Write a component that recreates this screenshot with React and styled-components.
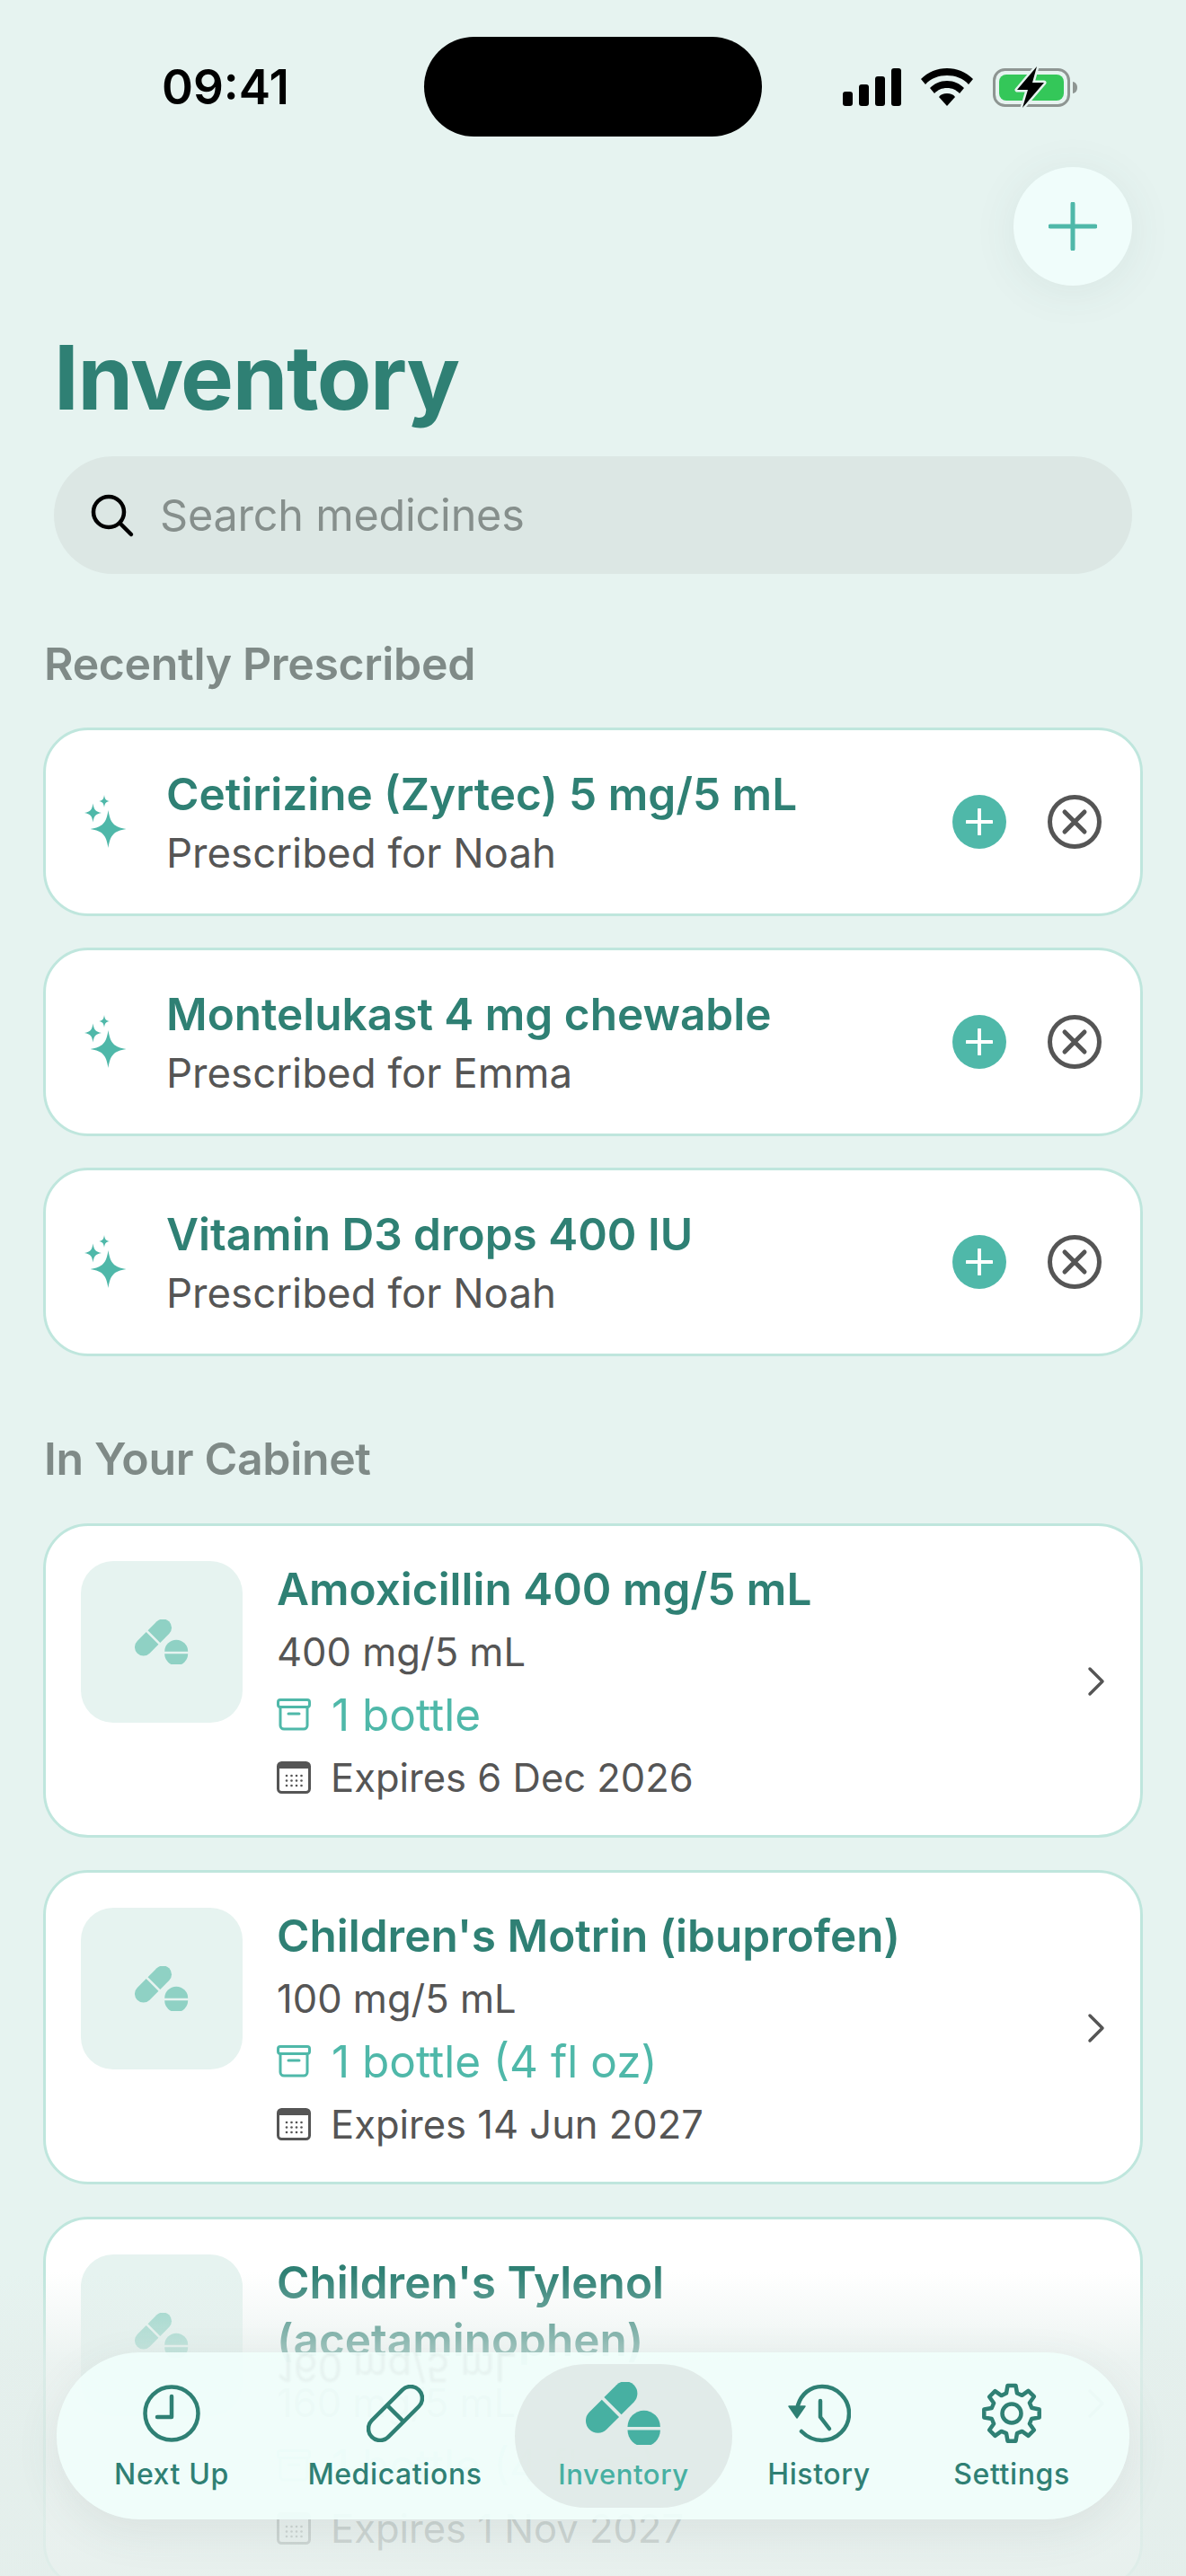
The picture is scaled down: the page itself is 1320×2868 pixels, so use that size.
import React from 'react';
import styled, { createGlobalStyle } from 'styled-components';

const Global = createGlobalStyle`
  html, body { margin: 0; padding: 0; background: #e6f3f0; }
  * { box-sizing: border-box; }
  body { font-family: Inter, "Liberation Sans", sans-serif; }
`;

const Screen = styled.div`
  position: relative;
  width: 1320px;
  height: 2868px;
  overflow: hidden;
  background: #e6f3f0;
`;
const StatusBar = styled.div`
  display: flex;
  align-items: center;
  height: 111px;
  margin-top: 41px;
  padding-left: 180px;
`;
const Time = styled.div`
  width: 292px;
  font-size: 53px;
  font-weight: 600;
  color: #000;
`;
const Island = styled.div`
  width: 376px;
  height: 111px;
  border-radius: 56px;
  background: #000;
`;
const StatusIcons = styled.div`
  display: flex;
  align-items: center;
  margin-left: 90px;
  gap: 22px;
`;
const FabRow = styled.div`
  display: flex;
  justify-content: flex-end;
  padding: 34px 60px 0;
`;
const Fab = styled.button`
  width: 132px;
  height: 132px;
  border: 0;
  padding: 0;
  border-radius: 50%;
  background: #f0fdfb;
  box-shadow: 0 6px 50px rgba(70, 90, 85, 0.08);
  display: flex;
  align-items: center;
  justify-content: center;
`;
const Title = styled.h1`
  margin: 42px 0 0 60px;
  font-size: 99px;
  line-height: 120px;
  font-weight: 700;
  color: #2f8074;
  letter-spacing: -1.4px;
`;
const Search = styled.div`
  margin: 28px 60px 0;
  height: 131px;
  border-radius: 66px;
  background: #dce7e4;
  display: flex;
  align-items: center;
  padding-left: 40px;
  gap: 28px;
  font-size: 48.5px;
  letter-spacing: -0.2px;
  color: #868f8c;
`;
const SectionTitle = styled.h2`
  margin: ${(p) => p.$top}px 0 0 49px;
  font-size: 50px;
  line-height: 64px;
  font-weight: 600;
  letter-spacing: -0.35px;
  color: #7f8a87;
`;
const List = styled.div`
  display: flex;
  flex-direction: column;
  gap: ${(p) => p.$gap}px;
  margin: ${(p) => p.$top}px 48px 0 48px;
`;
const PrescribedCard = styled.div`
  height: 210px;
  border: 3px solid #bfe6dd;
  border-radius: 50px;
  background: #fff;
  display: flex;
  align-items: center;
  padding: 0 43px 0 43px;
`;
const SparkleWrap = styled.div`
  width: 48px;
  height: 60px;
  margin-right: 43px;
  flex: none;
`;
const PrescribedText = styled.div`
  flex: 1;
  padding-top: 3px;
`;
const MedName = styled.div`
  font-size: 49.5px;
  line-height: ${(p) => p.$lh || 66}px;
  font-weight: 600;
  color: #2f8074;
`;
const MedSub = styled.div`
  font-size: 45.6px;
  line-height: 66px;
  color: #555;
`;
const ActionButtons = styled.div`
  display: flex;
  gap: 46px;
`;
const AddCircle = styled.div`
  width: 60px;
  height: 60px;
  border-radius: 50%;
  background: #4fb8a9;
  display: flex;
  align-items: center;
  justify-content: center;
`;
const CabinetCard = styled.div`
  border: 3px solid #bfe6dd;
  border-radius: 50px;
  background: #fff;
  display: flex;
  padding: 38px 39px 29px 39px;
`;
const Thumb = styled.div`
  width: 180px;
  height: 180px;
  margin-top: 1px;
  margin-right: 38px;
  flex: none;
  border-radius: 36px;
  background: #e6f3f0;
  display: flex;
  align-items: center;
  justify-content: center;
`;
const CabinetText = styled.div`
  flex: 1;
  min-width: 0;
  padding-right: 120px;
`;
const NameBlock = styled.div`
  margin-bottom: 3px;
`;
const DetailLine = styled.div`
  display: flex;
  align-items: center;
  gap: ${(p) => p.$gap || 22}px;
  height: 70px;
  font-size: ${(p) => p.$size || 43.5}px;
  color: ${(p) => p.$color || '#555'};
  white-space: nowrap;
`;
const ChevronWrap = styled.div`
  align-self: center;
  flex: none;
  display: flex;
  margin-bottom: 8px;
`;
const Fade = styled.div`
  position: absolute;
  left: 0;
  right: 0;
  top: 2530px;
  bottom: 0;
  background: linear-gradient(to bottom, rgba(228, 238, 235, 0) 0%, rgba(228, 238, 235, 0.72) 30%, rgba(228, 238, 235, 0.86) 100%);
`;
const Nav = styled.nav`
  position: absolute;
  left: 63px;
  top: 2619px;
  width: 1194px;
  height: 186px;
  border-radius: 93px;
  background: rgba(240, 254, 251, 0.92);
  box-shadow: 0 14px 50px rgba(70, 90, 85, 0.09);
  display: grid;
  grid-template-columns: 230px 267px 242px 193px 236px;
  padding: 13px;
  overflow: hidden;
`;
const Reflection = styled.div`
  position: absolute;
  left: 246px;
  top: -8px;
  font-size: 43.5px;
  line-height: 50px;
  color: #555;
  opacity: 0.06;
  transform: scaleY(-1);
  filter: blur(1px);
`;
const NavItem = styled.div`
  position: relative;
  height: 160px;
  border-radius: 80px;
  background: ${(p) => (p.$active ? 'rgba(222, 232, 229, 0.85)' : 'transparent')};
  color: ${(p) => (p.$active ? '#47b0a2' : '#2f8074')};
  display: flex;
  flex-direction: column;
  align-items: center;
  font-size: ${(p) => (p.$active ? 31 : 32)}px;
  font-weight: 500;
  letter-spacing: 0.6px;
`;
const NavIcon = styled.div`
  height: 92px;
  display: flex;
  align-items: center;
  justify-content: center;
  padding-top: 18px;
`;
const NavLabel = styled.div`
  line-height: 40px;
  margin-top: 11px;
`;

const Star = ({ cx, cy, rx, ry }) => (
  <path
    d={`M${cx} ${cy - ry}C${cx + rx * 0.12} ${cy - ry * 0.3} ${cx + rx * 0.3} ${cy - ry * 0.12} ${cx + rx} ${cy}C${cx + rx * 0.3} ${cy + ry * 0.12} ${cx + rx * 0.12} ${cy + ry * 0.3} ${cx} ${cy + ry}C${cx - rx * 0.12} ${cy + ry * 0.3} ${cx - rx * 0.3} ${cy + ry * 0.12} ${cx - rx} ${cy}C${cx - rx * 0.3} ${cy - ry * 0.12} ${cx - rx * 0.12} ${cy - ry * 0.3} ${cx} ${cy - ry}Z`}
  />
);
const Sparkles = () => (
  <svg width="48" height="60" viewBox="0 0 48 60" fill="#4fb8a9">
    <Star cx={26.5} cy={38} rx={20} ry={21} />
    <Star cx={9.5} cy={20} rx={9.5} ry={10.5} />
    <Star cx={22} cy={7} rx={6} ry={7} />
  </svg>
);
const Pills = ({ color, width = 60 }) => (
  <svg width={width} height={width * 5 / 6} viewBox="0 0 60 50" fill={color}>
    <g transform="translate(20.5 20) rotate(-45)">
      <path d="M-1.3 -9.7H-15.3a9.7 9.7 0 0 0 0 19.4H-1.3Z" />
      <path d="M1.3 -9.7H15.3a9.7 9.7 0 0 1 0 19.4H1.3Z" />
    </g>
    <path d="M33.2 35.7a13 13 0 0 1 26 0Z" />
    <path d="M33.2 38.3a13 13 0 0 0 26 0Z" />
  </svg>
);
const Signal = () => (
  <svg width="65" height="42" viewBox="0 0 65 42" fill="#000">
    <rect x="0" y="26" width="11" height="16" rx="3" />
    <rect x="18" y="18" width="11" height="24" rx="3" />
    <rect x="36" y="9" width="11" height="33" rx="3" />
    <rect x="54" y="0" width="11" height="42" rx="3" />
  </svg>
);
const Wifi = () => (
  <svg width="58" height="42" viewBox="0 0 58 42" fill="#000">
    <path d="M29 0C18 0 8 4 0 12l5 6C11 11 20 8 29 8s18 3 24 10l5-6C50 4 40 0 29 0Z" />
    <path d="M29 14c-8 0-14 3-19 8l5 6c4-4 8-6 14-6s10 2 14 6l5-6c-5-5-11-8-19-8Z" />
    <path d="M29 28c-4 0-7 1-9 4l9 10 9-10c-2-3-5-4-9-4Z" />
  </svg>
);
const Battery = () => (
  <svg width="94" height="46" viewBox="0 0 94 46">
    <rect x="1.500" y="3.500" width="83" height="40" rx="12" fill="none" stroke="#8e9592" strokeWidth="3" />
    <rect x="7" y="9" width="72" height="29" rx="8" fill="#34c759" />
    <path d="M89 17c3 .5 5 3 5 6.500s-2 6-5 6.500Z" fill="#8e9592" />
    <path d="M49 0 27 26h12l-6 20 24-28H44Z" fill="#000" stroke="#e6f3f0" strokeWidth="5" strokeLinejoin="round" paintOrder="stroke" />
  </svg>
);
const PlusIcon = ({ size, color, width }) => (
  <svg width={size} height={size} viewBox="0 0 54 54" stroke={color} strokeWidth={width} strokeLinecap="round">
    <path d="M27 2V52M2 27H52" />
  </svg>
);
const SearchIcon = () => (
  <svg width="50" height="50" viewBox="0 0 50 50" fill="none" stroke="#000" strokeWidth="4.500" strokeLinecap="round">
    <circle cx="21" cy="21" r="17" />
    <path d="M33.500 33.500 46 46" />
  </svg>
);
const CloseIcon = () => (
  <svg width="60" height="60" viewBox="0 0 60 60" fill="none" stroke="#555" strokeWidth="5" strokeLinecap="round">
    <circle cx="30" cy="30" r="27.500" />
    <path d="M19 19 41 41M41 19 19 41" />
  </svg>
);
const BoxIcon = () => (
  <svg width="38" height="36" viewBox="0 0 38 36" fill="none" stroke="#4fb8a9" strokeWidth="3" strokeLinecap="round" strokeLinejoin="round">
    <rect x="1.500" y="1.500" width="35" height="8" rx="2.500" />
    <path d="M4 10V30a4 4 0 0 0 4 4H30a4 4 0 0 0 4-4V10" />
    <path d="M13 17H25" />
  </svg>
);
const CalendarIcon = () => (
  <svg width="38" height="36" viewBox="0 0 38 36" fill="#555">
    <rect x="1.500" y="1.500" width="35" height="33" rx="4" fill="none" stroke="#555" strokeWidth="3" />
    <path d="M2 6a4 4 0 0 1 4-4H32a4 4 0 0 1 4 4V8H2Z" />
    {[11, 16.5, 22, 27.5].map((x) => [16, 21.5, 27].map((y) => <circle key={`${x}-${y}`} cx={x} cy={y} r="1.300" />))}
  </svg>
);
const Chevron = () => (
  <svg width="20" height="34" viewBox="0 0 20 34" fill="none" stroke="#555" strokeWidth="3.500" strokeLinecap="round" strokeLinejoin="round">
    <path d="M3 3 17 17 3 31" />
  </svg>
);
const ClockIcon = () => (
  <svg width="64" height="64" viewBox="0 0 64 64" fill="none" stroke="#2f8074" strokeWidth="4.500" strokeLinecap="round" strokeLinejoin="round">
    <circle cx="32" cy="32" r="29.500" />
    <path d="M32 13V36H16" />
  </svg>
);
const PillIcon = () => (
  <svg width="64" height="64" viewBox="0 0 64 64" fill="none" stroke="#2f8074" strokeWidth="4.500" strokeLinejoin="round">
    <g transform="translate(32 32) rotate(-45)">
      <rect x="-37" y="-13" width="74" height="26" rx="13" />
      <path d="M0 -13V13" />
    </g>
  </svg>
);
const HistoryIcon = () => (
  <svg width="70" height="66" viewBox="0 0 70 66" fill="none" stroke="#2f8074" strokeWidth="4.500" strokeLinecap="round" strokeLinejoin="round">
    <path d="M11 24C15 11 25 3 38 3a30 30 0 1 1 0 60C29 63 21 59 15 53" />
    <path d="M1 25H19L10 38Z" fill="#2f8074" strokeWidth="1.500" />
    <path d="M36 19V37L46 50" />
  </svg>
);
const GearIcon = () => (
  <svg width="68" height="68" viewBox="0 0 68 68" fill="none" stroke="#2f8074" strokeWidth="4.500" strokeLinejoin="round">
    <path d="M29.500 3h9l1.500 8.500 5.500 2.300 7-5 6.400 6.400-5 7 2.300 5.500L64.700 29.500v9l-8.500 1.500-2.300 5.500 5 7-6.400 6.400-7-5-5.500 2.300L38.500 64.700h-9L28 56.200l-5.500-2.300-7 5-6.400-6.400 5-7-2.300-5.500-8.500-1.500v-9l8.500-1.500 2.300-5.500-5-7 6.400-6.400 7 5L28 11.500Z" />
    <circle cx="34" cy="34" r="10.500" />
  </svg>
);

const prescribed = [
  ['Cetirizine (Zyrtec) 5 mg/5 mL', 'Prescribed for Noah'],
  ['Montelukast 4 mg chewable', 'Prescribed for Emma'],
  ['Vitamin D3 drops 400 IU', 'Prescribed for Noah'],
];
const cabinet = [
  ['Amoxicillin 400 mg/5 mL', '400 mg/5 mL', '1 bottle', 'Expires 6 Dec 2026'],
  ["Children's Motrin (ibuprofen)", '100 mg/5 mL', '1 bottle (4 fl oz)', 'Expires 14 Jun 2027'],
  ["Children's Tylenol (acetaminophen)", '160 mg/5 mL', '1 bottle (4 fl oz)', 'Expires 1 Nov 2027'],
];
const tabs = [
  ['Next Up', <ClockIcon />],
  ['Medications', <PillIcon />],
  ['Inventory', <Pills color="#47b0a2" width={84} />, true],
  ['History', <HistoryIcon />],
  ['Settings', <GearIcon />],
];

export default function App() {
  return (
    <Screen>
      <Global />
      <StatusBar>
        <Time>09:41</Time>
        <Island />
        <StatusIcons>
          <Signal />
          <Wifi />
          <Battery />
        </StatusIcons>
      </StatusBar>
      <FabRow>
        <Fab><PlusIcon size={54} color="#4fb8a9" width={5} /></Fab>
      </FabRow>
      <Title>Inventory</Title>
      <Search>
        <SearchIcon />
        Search medicines
      </Search>
      <SectionTitle $top={68}>Recently Prescribed</SectionTitle>
      <List $gap={35} $top={39}>
        {prescribed.map(([name, sub]) => (
          <PrescribedCard key={name}>
            <SparkleWrap><Sparkles /></SparkleWrap>
            <PrescribedText>
              <MedName>{name}</MedName>
              <MedSub>{sub}</MedSub>
            </PrescribedText>
            <ActionButtons>
              <AddCircle><PlusIcon size={30} color="#fff" width={7} /></AddCircle>
              <CloseIcon />
            </ActionButtons>
          </PrescribedCard>
        ))}
      </List>
      <SectionTitle $top={82}>In Your Cabinet</SectionTitle>
      <List $gap={36} $top={40}>
        {cabinet.map(([name, dose, qty, exp]) => (
          <CabinetCard key={name}>
            <Thumb><Pills color="#8fd1c4" /></Thumb>
            <CabinetText>
              <NameBlock><MedName $lh={64}>{name}</MedName></NameBlock>
              <DetailLine>{dose}</DetailLine>
              <DetailLine $color="#4fb8a9" $size={49.5} $gap={23}><BoxIcon />{qty}</DetailLine>
              <DetailLine><CalendarIcon />{exp}</DetailLine>
            </CabinetText>
            <ChevronWrap><Chevron /></ChevronWrap>
          </CabinetCard>
        ))}
      </List>
      <Fade />
      <Nav>
        <Reflection aria-hidden="true">160 mg/5 mL</Reflection>
        {tabs.map(([label, icon, active]) => (
          <NavItem key={label} $active={active}>
            <NavIcon>{icon}</NavIcon>
            <NavLabel>{label}</NavLabel>
          </NavItem>
        ))}
      </Nav>
    </Screen>
  );
}
